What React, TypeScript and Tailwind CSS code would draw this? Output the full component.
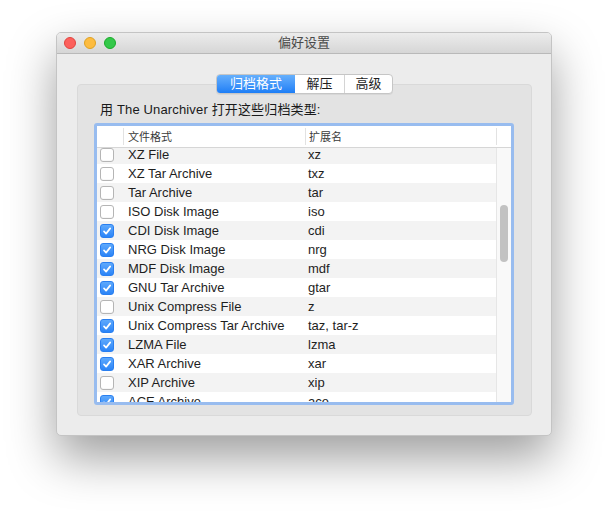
import React from 'react';

type Row = { name: string; ext: string; on: boolean };

const rows: Row[] = [
  { name: 'XZ File', ext: 'xz', on: false },
  { name: 'XZ Tar Archive', ext: 'txz', on: false },
  { name: 'Tar Archive', ext: 'tar', on: false },
  { name: 'ISO Disk Image', ext: 'iso', on: false },
  { name: 'CDI Disk Image', ext: 'cdi', on: true },
  { name: 'NRG Disk Image', ext: 'nrg', on: true },
  { name: 'MDF Disk Image', ext: 'mdf', on: true },
  { name: 'GNU Tar Archive', ext: 'gtar', on: true },
  { name: 'Unix Compress File', ext: 'z', on: false },
  { name: 'Unix Compress Tar Archive', ext: 'taz, tar-z', on: true },
  { name: 'LZMA File', ext: 'lzma', on: true },
  { name: 'XAR Archive', ext: 'xar', on: true },
  { name: 'XIP Archive', ext: 'xip', on: false },
  { name: 'ACE Archive', ext: 'ace', on: true },
];

function Checkbox({ on }: { on: boolean }) {
  if (on) {
    return (
      <div className="w-[14px] h-[14px] rounded-[3px] bg-gradient-to-b from-[#5ea9fc] to-[#2a84f7] border border-[#2a7ff0] flex items-center justify-center">
        <svg width="10" height="10" viewBox="0 0 10 10" fill="none">
          <path d="M2 5.4 L4.1 7.6 L8.2 2.4" stroke="white" strokeWidth="1.7" strokeLinecap="round" strokeLinejoin="round" />
        </svg>
      </div>
    );
  }
  return <div className="w-[14px] h-[14px] rounded-[3px] bg-white border border-[#b5b5b5] shadow-[inset_0_-1px_0_rgba(0,0,0,0.03)]" />;
}

export default function App() {
  return (
    <div
      className="w-[608px] h-[516px] bg-white pt-[32px] pl-[56px] text-[#1e1e1e]"
      style={{ fontFamily: '"Liberation Sans", "Noto Sans CJK SC", sans-serif' }}
    >
      <div className="w-[496px] h-[404px] rounded-[5px] bg-[#ececec] border border-[#c4c4c4] shadow-[0_22px_48px_rgba(0,0,0,0.38)] flex flex-col overflow-hidden">
        {/* title bar */}
        <div className="h-[21px] shrink-0 bg-gradient-to-b from-[#ececec] to-[#d6d6d6] border-b border-[#b9b9b9] flex items-center pl-[7px] pr-[7px]">
          <div className="flex gap-[8px] w-[52px]">
            <div className="w-[12px] h-[12px] rounded-full bg-[#fc605c] border border-[#e0443e]" />
            <div className="w-[12px] h-[12px] rounded-full bg-[#fdbc40] border border-[#dea123]" />
            <div className="w-[12px] h-[12px] rounded-full bg-[#34c84a] border border-[#1aab29]" />
          </div>
          <div className="flex-1 text-center text-[13px] leading-[16px] text-[#4a4a4a]">偏好设置</div>
          <div className="w-[52px]" />
        </div>

        {/* body */}
        <div className="flex-1 min-h-0 flex flex-col pt-[20px] pl-[20px] pr-[19px] pb-[19px]">
          <div className="self-center relative z-10 flex h-[20px] shrink-0 rounded-[4px] border border-[#c6c6c6] bg-white overflow-hidden text-[13px] leading-[18px] shadow-[0_1px_0_rgba(0,0,0,0.05)]">
            <div className="w-[78px] bg-gradient-to-b from-[#65affc] to-[#1c7ef6] text-white flex items-center justify-center">归档格式</div>
            <div className="w-[49px] flex items-center justify-center text-[#1e1e1e]">解压</div>
            <div className="w-[48px] border-l border-[#d4d4d4] flex items-center justify-center text-[#1e1e1e]">高级</div>
          </div>

          <div className="-mt-[10px] flex-1 min-h-0 rounded-[4px] bg-[#e3e3e3] border border-[#d9d9d9] pt-[17px] pl-[16px] pr-[17px] pb-[10px] flex flex-col">
            <div className="pl-[6px] text-[13px] leading-[16px] mb-[5px] text-[#1a1a1a] tracking-[0.15px]">用 The Unarchiver 打开这些归档类型:</div>

            <div className="flex-1 min-h-0 border-[3px] border-[#98bcef] rounded-[3px] bg-white flex flex-col overflow-hidden">
              {/* header */}
              <div className="h-[22px] shrink-0 flex border-b border-[#d6d6d6] text-[11px] leading-[14px] text-[#3a3a3a]">
                <div className="w-[26px]" />
                <div className="w-[182px] my-[2px] border-l border-[#e2e2e2] pl-[4px] flex items-center">文件格式</div>
                <div className="w-[191px] my-[2px] border-l border-[#e2e2e2] pl-[3px] flex items-center">扩展名</div>
                <div className="w-[15px] my-[2px] border-l border-[#e2e2e2]" />
              </div>

              {/* rows */}
              <div className="flex-1 min-h-0 flex overflow-hidden">
                <div className="flex-1 flex flex-col -mt-[3px] text-[13px] leading-[16px]">
                  {rows.map((r, i) => (
                    <div key={r.name} className={`h-[19px] shrink-0 flex items-center ${i % 2 === 0 ? 'bg-[#f3f3f3]' : 'bg-white'}`}>
                      <div className="w-[26px] pl-[3px]">
                        <Checkbox on={r.on} />
                      </div>
                      <div className="w-[182px] pl-[5px] pt-[1px] text-[#1e1e1e]">{r.name}</div>
                      <div className="flex-1 pl-[3px] pt-[1px] text-[#1e1e1e]">{r.ext}</div>
                    </div>
                  ))}
                </div>
                <div className="w-[15px] shrink-0 bg-[#f9f9f9] border-l border-[#e6e6e6] pt-[57px] pl-[3px]">
                  <div className="w-[8px] h-[57px] rounded-full bg-[#c2c2c2]" />
                </div>
              </div>
            </div>
          </div>
        </div>
      </div>
    </div>
  );
}
